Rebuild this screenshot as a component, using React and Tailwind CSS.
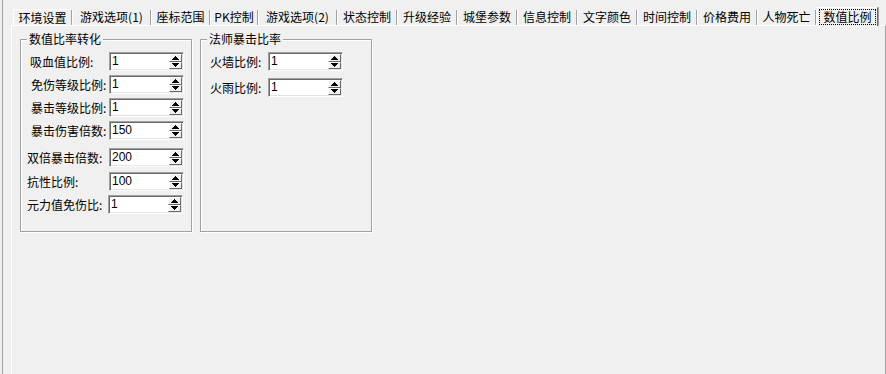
const tabs = [
  { label: "环境设置", w: "w-[60px]" },
  { label: "游戏选项(1)", w: "w-[79px]" },
  { label: "座标范围", w: "w-[59px]" },
  { label: "PK控制", w: "w-[48px]" },
  { label: "游戏选项(2)", w: "w-[79px]" },
  { label: "状态控制", w: "w-[60px]" },
  { label: "升级经验", w: "w-[60px]" },
  { label: "城堡参数", w: "w-[60px]" },
  { label: "信息控制", w: "w-[60px]" },
  { label: "文字颜色", w: "w-[60px]" },
  { label: "时间控制", w: "w-[60px]" },
  { label: "价格费用", w: "w-[60px]" },
  { label: "人物死亡", w: "w-[59px]" },
];

const ratioRows = [
  { label: "吸血值比例:", value: "1", pad: "pl-[9px] w-[88px]", mt: "mt-0" },
  { label: "免伤等级比例:", value: "1", pad: "pl-[10px] w-[88px]", mt: "mt-[4px]" },
  { label: "暴击等级比例:", value: "1", pad: "pl-[10px] w-[88px]", mt: "mt-[4px]" },
  { label: "暴击伤害倍数:", value: "150", pad: "pl-[10px] w-[88px]", mt: "mt-[4px]" },
  { label: "双倍暴击倍数:", value: "200", pad: "pl-[6px] w-[88px]", mt: "mt-[8px]" },
  { label: "抗性比例:", value: "100", pad: "pl-[6px] w-[88px]", mt: "mt-[5px]" },
  { label: "元力值免伤比:", value: "1", pad: "pl-[6px] w-[87px]", mt: "mt-[4px]" },
];

const mageRows = [
  { label: "火墙比例:", value: "1", pad: "pl-[9px] w-[67px]", mt: "mt-0" },
  { label: "火雨比例:", value: "1", pad: "pl-[9px] w-[67px]", mt: "mt-[7px]" },
];

function SpinButton({ up }) {
  return (
    <div className="flex flex-1 items-center justify-center border border-t-white border-l-white border-r-[#696969] border-b-[#696969] bg-[#f0f0f0]">
      <svg width="7" height="4" viewBox="0 0 7 4" shapeRendering="crispEdges">
        <path d={up ? "M0 4h7L3.5 0z" : "M0 0h7L3.5 4z"} fill="#000" />
      </svg>
    </div>
  );
}

function SpinInput({ value }) {
  return (
    <div className="flex h-[19px] w-[75px] border border-t-[#a0a0a0] border-l-[#a0a0a0] border-r-white border-b-white bg-white p-[1px] shadow-[inset_1px_1px_0_#696969,inset_-1px_-1px_0_#e3e3e3]">
      <span className="flex-1 pl-[1px] font-['Liberation_Sans',sans-serif] text-[12px] leading-[15px] text-black">{value}</span>
      <div className="flex h-full w-[13px] flex-col">
        <SpinButton up />
        <SpinButton />
      </div>
    </div>
  );
}

function Group({ title, rows }) {
  return (
    <div className="relative h-[193px] w-[172px] border border-[#a0a0a0] shadow-[inset_1px_1px_0_#fff,1px_1px_0_#fff]">
      <span className="absolute -top-[7px] left-[6px] bg-[#f0f0f0] px-[2px] text-[12px] leading-[12px]">{title}</span>
      <div className="flex flex-col pt-[12px]">
        {rows.map((r) => (
          <div key={r.label} className={`flex items-center ${r.mt}`}>
            <span className={`shrink-0 text-[12px] leading-[19px] ${r.pad}`}>{r.label}</span>
            <SpinInput value={r.value} />
          </div>
        ))}
      </div>
    </div>
  );
}

export default function App() {
  return (
    <div className="flex h-[374px] w-[886px] overflow-hidden bg-[#f0f0f0] pl-[2px] font-['Noto_Sans_CJK_SC',sans-serif] text-black">
      <div className="flex flex-1 flex-col border-l border-[#a0a0a0]">
        <div className="relative z-10 flex h-[25px] items-end pl-[10px]">
          {tabs.map((t, i) => (
            <div key={t.label} className={`flex h-[16px] items-center ${t.w}`}>
              <div className={`flex h-full flex-1 items-center justify-center text-[12px] leading-[12px] ${i === 0 ? "border-l border-t border-white" : ""}`}>
                {t.label}
              </div>
              <div className="h-[15px] w-[1px] self-end bg-[#a0a0a0]" />
              <div className="h-[15px] w-[1px] self-end bg-white" />
            </div>
          ))}
          <div className="-mb-[1px] h-[19px] w-[61px] border-l border-t border-r border-l-white border-t-white border-r-[#696969] bg-[#f0f0f0] p-[1px] pb-0 shadow-[1px_0_0_#a0a0a0]">
            <div className="flex h-[16px] items-center justify-center border border-dotted border-black text-[12px] leading-[12px]">
              数值比例
            </div>
          </div>
        </div>
        <div className="ml-[8px] flex flex-1 gap-[8px] border-l border-t border-r border-l-white border-t-white border-r-[#a0a0a0] pl-[8px] pt-[13px]">
          <Group title="数值比率转化" rows={ratioRows} />
          <Group title="法师暴击比率" rows={mageRows} />
        </div>
      </div>
    </div>
  );
}
